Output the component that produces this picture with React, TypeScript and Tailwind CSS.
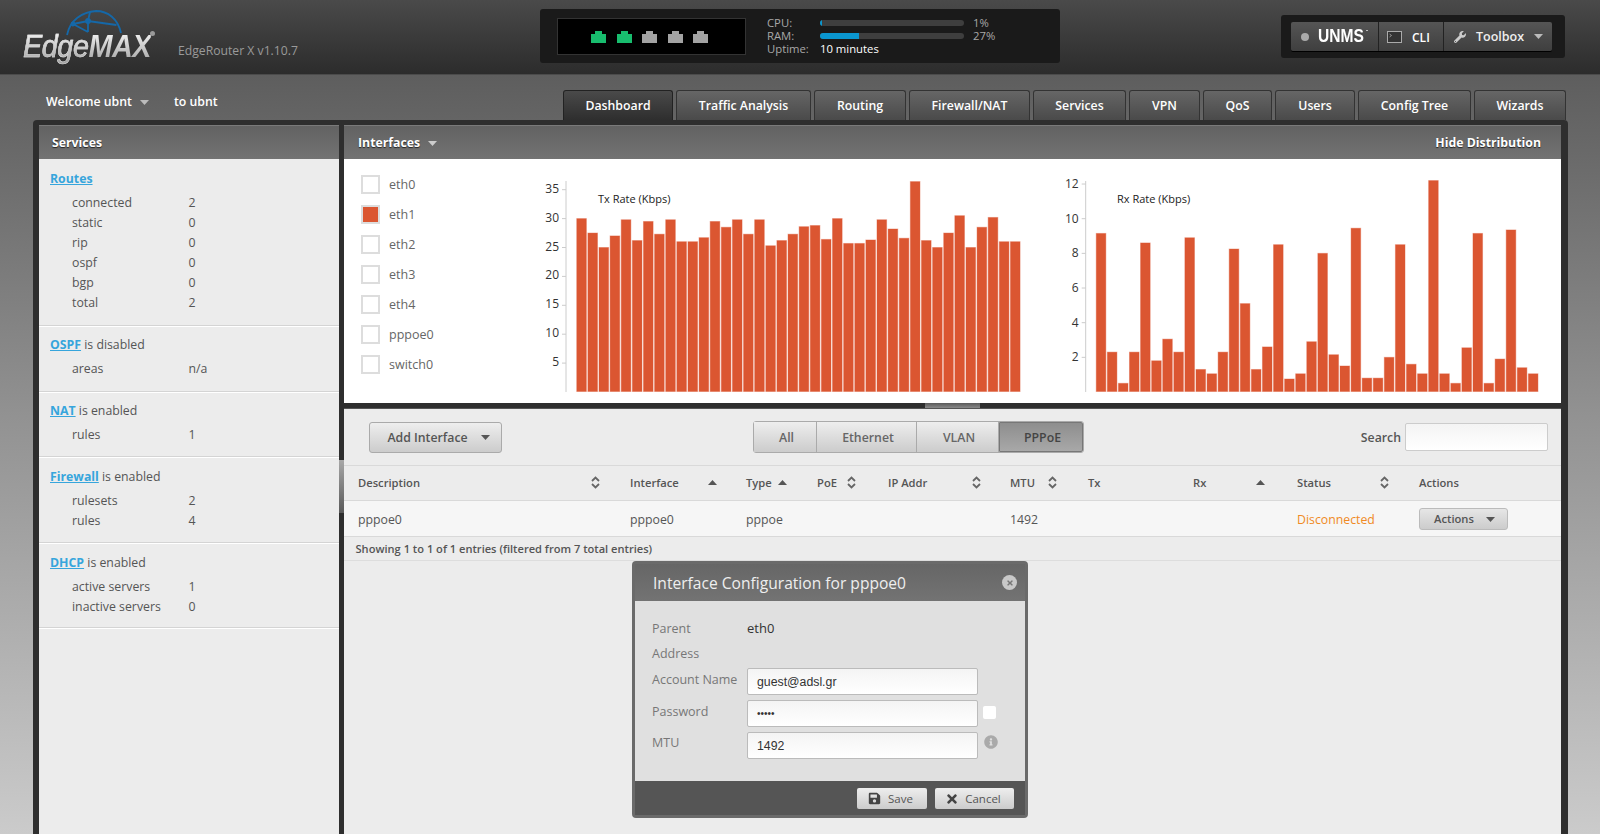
import React from 'react';
import {FaWrench, FaSave, FaTimes, FaInfoCircle} from 'react-icons/fa';

const txRates = [30, 27.5, 25, 27, 29.8, 26.2, 29.5, 27.3, 29.8, 26, 26, 26.7, 29.5, 28.5, 29.8, 27.3, 29.8, 25.3, 26.2, 27.3, 28.6, 28.8, 26.4, 30, 25.7, 25.7, 26.3, 29.8, 28.2, 26.6, 36.4, 26.2, 25, 27.5, 30.5, 25, 28.5, 30.2, 26, 26];
const rxRates = [9.15, 2.3, 0.5, 2.3, 8.6, 1.8, 3.05, 2.3, 8.9, 1.3, 1.05, 2.3, 8.25, 5.1, 1.3, 2.6, 8.5, 0.75, 1.05, 2.9, 8, 2.15, 1.5, 9.45, 0.8, 0.8, 2, 8.5, 1.6, 1.05, 12.2, 1.05, 0.5, 2.55, 9.15, 0.5, 1.9, 9.35, 1.4, 1.05];

const tabs = [
    {label: 'Dashboard', width: 'w-[110px]'},
    {label: 'Traffic Analysis', width: 'w-[135px]'},
    {label: 'Routing', width: 'w-[92px]'},
    {label: 'Firewall/NAT', width: 'w-[121px]'},
    {label: 'Services', width: 'w-[93px]'},
    {label: 'VPN', width: 'w-[71px]'},
    {label: 'QoS', width: 'w-[69px]'},
    {label: 'Users', width: 'w-[80px]'},
    {label: 'Config Tree', width: 'w-[113px]'},
    {label: 'Wizards', width: 'w-[92px]'},
];

const Caret = ({className = ''}: {className?: string}) => (
    <svg className={className} width="9" height="5" viewBox="0 0 9 5" fill="currentColor">
        <path d="M0 0h9L4.500 5z"/>
    </svg>
);

const CaretUp = ({className = ''}: {className?: string}) => (
    <svg className={className} width="9" height="5" viewBox="0 0 9 5" fill="#555">
        <path d="M0 5h9L4.500 0z"/>
    </svg>
);

const SortBoth = ({className = ''}: {className?: string}) => (
    <svg className={className} width="9" height="13" viewBox="0 0 9 13" fill="none" stroke="#666" strokeWidth="1.8">
        <path d="M1 5l3.500-3.500L8 5M1 8l3.500 3.500L8 8"/>
    </svg>
);

const Port = ({on}: {on: boolean}) => (
    <svg width="15" height="12" viewBox="0 0 15 12" fill={on ? '#18bd6e' : '#a3a3a3'}>
        <path d="M0 3h4V0h7v3h4v9H0z"/>
    </svg>
);

const ServiceSection = ({title, suffix, rows, className = 'pt-[8.5px] pb-[12px]'}: {
    title: string, suffix?: string, rows: [string, string][], className?: string
}) => (
    <div className={className + " border-b border-white shadow-[inset_0_-1px_0_#d4d4d4]"}>
        <div className="h-5 pl-[11px] leading-5 text-[12.3px] text-[#555]">
            <a className="font-bold text-[#36a5dc] underline">{title}</a>{suffix ? ' ' + suffix : ''}
        </div>
        <div className="mt-[4px]">
            {rows.map(([k, v]) => (
                <div key={k} className="flex h-5 pl-[33px] leading-5 text-[12.3px] text-[#555]">
                    <span className="w-[116.5px]">{k}</span>
                    <span>{v}</span>
                </div>
            ))}
        </div>
    </div>
);

const RateChart = ({title, titleX, axisX, data, max, step, unit, barX, pitch, width, labelDy}: {
    title: string, titleX: number, axisX: number, data: number[], max: number, step: number,
    unit: number, barX: number, pitch: number, width: string, labelDy: number
}) => {
    const base = 233;
    const ticks: number[] = [];
    for (let t = step; t <= max; t += step) ticks.push(t);
    return (
        <svg className={width + " h-full shrink-0"} viewBox={`0 0 ${width === 'w-[500px]' ? 500 : 521} 244`}>
            <line x1={axisX} x2={axisX} y1="22" y2={base} stroke="#ccc"/>
            {ticks.map(t => (
                <g key={t}>
                    <line x1={axisX - 4} x2={axisX} y1={base - t * unit} y2={base - t * unit} stroke="#ccc"/>
                    <text x={axisX - 7} y={base - t * unit + labelDy} textAnchor="end" fontSize="12" fill="#333"
                          fontFamily="'Open Sans', sans-serif">{t}</text>
                </g>
            ))}
            <text x={titleX} y="44" fontSize="11" fill="#222" fontFamily="'Open Sans', sans-serif">{title}</text>
            {data.map((v, i) => (
                <rect key={i} x={barX + i * pitch + 0.25} y={base - v * unit} width={pitch - 1.5} height={v * unit - 0.5}
                      fill="#db5631" stroke="#db5631" strokeOpacity="0.4"/>
            ))}
        </svg>
    );
};

const Head = ({label, width, icon}: {label: string, width: string, icon?: React.ReactNode}) => (
    <div className={width + " flex items-center shrink-0"}>
        <span>{label}</span>
        {icon}
    </div>
);

const App: React.FC = () => {
    return (
        <div className="relative w-[1600px] h-[834px] overflow-hidden flex flex-col bg-gradient-to-b from-[#535353] via-[#929292] via-50% to-[#cbcbcb] font-['Open_Sans',sans-serif]">
            {/* top bar */}
            <header className="relative h-[75px] shrink-0 flex bg-gradient-to-b from-[#4a4a4a] to-[#2c2c2c] border-b border-[#4b4b4b]">
                <div className="w-[540px] shrink-0 flex">
                    <div className="relative ml-[22px] w-[135px] h-full shrink-0">
                        <svg className="absolute left-[44px] top-[10px]" width="56" height="26" viewBox="0 0 56 26" fill="none"
                             stroke="#1568a8" strokeWidth="1.800">
                            <path d="M1 25C4 10 16 2 30 1c12 0 22 8 25 22"/>
                            <path d="M7 14l15-3 28.500 4M7 14l15 8M24 2l-2 9 0 11"/>
                            <circle cx="22" cy="11" r="2" fill="#1568a8"/>
                            <circle cx="7" cy="14" r="1.500" fill="#1568a8"/>
                        </svg>
                        <span className="absolute left-[1px] top-[28px] origin-left scale-x-[0.9] text-[32px] leading-[36px] italic text-transparent bg-gradient-to-b from-white to-[#a0a0a0] bg-clip-text tracking-[-0.5px] font-['Liberation_Sans',sans-serif]">
                            <span className="[-webkit-text-stroke:0.5px_#dddddd]">Edge</span><span className="font-bold">MAX</span>
                        </span>
                        <span className="absolute left-[128px] top-[31px] w-[5px] h-[5px] rounded-full bg-[#999]"/>
                    </div>
                    <span className="ml-[21px] mt-[42px] text-[12.2px] leading-[18px] text-[#9a9a9a]">EdgeRouter X v1.10.7</span>
                </div>

                <div className="w-[520px] h-[54px] mt-[9px] shrink-0 flex rounded-[3px] bg-[#1a1a1a]">
                    <div className="ml-[17px] mt-[9px] w-[189px] h-[37px] flex items-center justify-center gap-[10.500px] pr-[4px] bg-black border border-[#333]">
                        <Port on/><Port on/><Port on={false}/><Port on={false}/><Port on={false}/>
                    </div>
                    <div className="ml-[21px] mt-[7px] text-[11.3px] leading-[13px] text-[#a8a8a8]">
                        <div className="flex items-center">
                            <span className="w-[53px]">CPU:</span>
                            <span className="w-[144px] h-[6px] rounded-full bg-[#3e3e3e] overflow-hidden"><span className="block w-[2px] h-full bg-[#0a96cf]"/></span>
                            <span className="ml-[9px]">1%</span>
                        </div>
                        <div className="flex items-center">
                            <span className="w-[53px]">RAM:</span>
                            <span className="w-[144px] h-[6px] rounded-full bg-[#3e3e3e] overflow-hidden"><span className="block w-[39px] h-full bg-[#0a96cf]"/></span>
                            <span className="ml-[9px]">27%</span>
                        </div>
                        <div className="flex items-center">
                            <span className="w-[53px]">Uptime:</span>
                            <span className="text-white">10 minutes</span>
                        </div>
                    </div>
                </div>

                <div className="ml-[221px] mt-[15px] w-[284px] h-[43px] shrink-0 flex items-center pl-[10px] rounded-[3px] bg-[#1a1a1a]">
                    <div className="flex h-[29px] w-[261px] rounded-[2px] bg-gradient-to-b from-[#555] to-[#3f3f3f] shadow-[0_1px_0_#000] text-white">
                        <div className="w-[88px] flex items-center pl-[10px] border-r border-[#222]">
                            <span className="w-[8px] h-[8px] rounded-full bg-[#aaa]"/>
                            <span className="ml-[9px] origin-left scale-x-[0.82] text-[19px] font-bold font-['Liberation_Sans',sans-serif]">UNMS</span>
                            <span className="ml-[-8px] mb-[12px] w-[2px] h-px bg-[#bbb]"/>
                        </div>
                        <div className="w-[65px] flex items-center pl-[8px] border-r border-[#222]">
                            <svg width="15" height="12" viewBox="0 0 15 12" fill="#333" stroke="#aaa">
                                <rect x="0.500" y="0.500" width="14" height="11"/>
                                <path d="M2.500 3l2 1.500-2 1.500" strokeWidth="0.800" fill="none"/>
                            </svg>
                            <span className="ml-[10px] pt-[2px] text-[12px] font-semibold">CLI</span>
                        </div>
                        <div className="flex-1 flex items-center pl-[10px] text-[#eee]">
                            <FaWrench className="text-[12px] text-[#ccc]"/>
                            <span className="ml-[10px] pt-[2px] text-[12.5px] font-semibold">Toolbox</span>
                            <Caret className="ml-[10px] text-[#bbb]"/>
                        </div>
                    </div>
                </div>
            </header>

            {/* welcome + tabs */}
            <div className="h-[45px] shrink-0 flex items-end justify-between pr-[34px]">
                <div className="h-full flex items-center pt-[9px] pl-[46px] text-[12.3px] font-semibold text-white">
                    <span>Welcome ubnt</span>
                    <Caret className="ml-[8px] text-[#bbb]"/>
                    <span className="ml-[25px]">to ubnt</span>
                </div>
                <nav className="flex gap-[3px]">
                    {tabs.map((tab, i) => (
                        <div key={tab.label}
                             className={tab.width + " h-[30px] flex items-center justify-center pt-[2px] rounded-t-[3px] border border-b-0 text-[12.3px] font-semibold " + (i === 0
                                 ? "border-[#222] bg-gradient-to-b from-[#4a4a4a] to-[#2e2e2e] text-white"
                                 : "border-[#333] bg-gradient-to-b from-[#666] to-[#4a4a4a] text-white")}>
                            {tab.label}
                        </div>
                    ))}
                </nav>
            </div>

            {/* main frame */}
            <main className="relative ml-[33px] w-[1535px] flex-1 min-h-0 flex gap-[5px] pt-[5px] pl-[6px] pr-[7px] rounded-t-[4px] bg-[#2e2e2e]">
                <section className="w-[300px] shrink-0 flex flex-col bg-[#ececec]">
                    <div className="h-[34px] shrink-0 flex items-center pl-[13px] pt-[1px] border-t border-[#7a7a7a] bg-gradient-to-b from-[#626262] to-[#737373] text-[12.3px] font-bold text-white [text-shadow:0_1px_1px_#222]">Services</div>
                    <ServiceSection title="Routes" className="pt-[10px] pb-[13px]" rows={[['connected', '2'], ['static', '0'], ['rip', '0'], ['ospf', '0'], ['bgp', '0'], ['total', '2']]}/>
                    <ServiceSection title="OSPF" suffix="is disabled" className="pt-[7.5px] pb-[13px]" rows={[['areas', 'n/a']]}/>
                    <ServiceSection title="NAT" suffix="is enabled" rows={[['rules', '1']]}/>
                    <ServiceSection title="Firewall" suffix="is enabled" rows={[['rulesets', '2'], ['rules', '4']]}/>
                    <ServiceSection title="DHCP" suffix="is enabled" className="pt-[9.5px] pb-[11px]" rows={[['active servers', '1'], ['inactive servers', '0']]}/>
                </section>

                <div className="absolute left-[306px] top-[340px] w-[5px] h-[53px] bg-gradient-to-b from-[#a8a8a8] to-[#5a5a5a]"/>

                <section className="w-[1217px] shrink-0 flex flex-col bg-[#ececec]">
                    <div className="h-[34px] shrink-0 flex items-center justify-between pl-[14px] pr-[20px] pt-[1px] border-t border-[#7a7a7a] bg-gradient-to-b from-[#626262] to-[#737373] text-[12.3px] font-bold text-white [text-shadow:0_1px_1px_#222]">
                        <div className="flex items-center">
                            <span>Interfaces</span>
                            <Caret className="ml-[8px] text-[#ccc]"/>
                        </div>
                        <span>Hide Distribution</span>
                    </div>

                    <div className="h-[244px] shrink-0 flex bg-white">
                        <div className="w-[196px] shrink-0 pl-[17px] pt-[16px]">
                            {['eth0', 'eth1', 'eth2', 'eth3', 'eth4', 'pppoe0', 'switch0'].map(name => (
                                <div key={name} className="flex items-start h-[30px]">
                                    <span className={"w-[19px] h-[19px] border-2 border-[#ddd] " + (name === 'eth1' ? "bg-[#db5631]" : "bg-white")}/>
                                    <span className="ml-[9px] text-[12.5px] leading-5 text-[#666]">{name}</span>
                                </div>
                            ))}
                        </div>
                        <RateChart title="Tx Rate (Kbps)" titleX={58} axisX={26} data={txRates} max={35} step={5} unit={5.78}
                                   barX={36.500} pitch={11.120} width="w-[500px]" labelDy={3}/>
                        <RateChart title="Rx Rate (Kbps)" titleX={77} axisX={45.700} data={rxRates} max={12} step={2} unit={17.330}
                                   barX={56} pitch={11.080} width="w-[521px]" labelDy={4}/>
                    </div>

                    <div className="h-[6px] shrink-0 flex justify-center bg-[#2e2e2e] border-b border-[#555]">
                        <span className="w-[55px] h-full bg-gradient-to-b from-[#5a5a5a] to-[#8a8a8a]"/>
                    </div>

                    <div className="h-[56px] shrink-0 flex items-center pl-[25px] pr-[13px] text-[12.3px] text-[#555]">
                        <button className="w-[133px] h-[31px] flex items-center justify-center pl-[6px] rounded-[3px] border border-[#aaa] bg-gradient-to-b from-[#eee] to-[#ccc] text-[12.3px] font-semibold text-[#555]">
                            <span className="pt-[3px]">Add Interface</span>
                            <Caret className="ml-[13px]"/>
                        </button>
                        <div className="ml-[251px] flex h-[32px] w-[331px] rounded-[3px] border border-[#aaa] font-semibold text-[#666]">
                            <span className="w-[63px] flex items-center justify-center pl-[3px] pt-[3px] border-r border-[#aaa] bg-gradient-to-b from-[#eee] to-[#ccc]">All</span>
                            <span className="w-[100px] flex items-center justify-center pl-[3px] pt-[3px] border-r border-[#aaa] bg-gradient-to-b from-[#eee] to-[#ccc]">Ethernet</span>
                            <span className="w-[82px] flex items-center justify-center pl-[3px] pt-[3px] border-r border-[#aaa] bg-gradient-to-b from-[#eee] to-[#ccc]">VLAN</span>
                            <span className="flex-1 flex items-center justify-center pl-[3px] pt-[3px] rounded-r-[2px] border border-[#777] bg-gradient-to-b from-[#8e8e8e] to-[#a8a8a8] text-[#444]">PPPoE</span>
                        </div>
                        <span className="ml-auto pt-[3px] font-semibold text-[#555]">Search</span>
                        <input className="ml-[4px] w-[143px] h-[28px] rounded-[2px] border border-[#ccc] bg-gradient-to-b from-[#f4f4f4] to-white"/>
                    </div>

                    <div className="h-[36px] shrink-0 flex items-center pl-[14px] border-y border-[#d9d9d9] text-[11.2px] font-semibold text-[#555]">
                        <Head label="Description" width="w-[272px]" icon={<SortBoth className="ml-[171px]"/>}/>
                        <Head label="Interface" width="w-[116px]" icon={<CaretUp className="ml-[29px]"/>}/>
                        <Head label="Type" width="w-[71px]" icon={<CaretUp className="ml-[6px]"/>}/>
                        <Head label="PoE" width="w-[71px]" icon={<SortBoth className="ml-[10px]"/>}/>
                        <Head label="IP Addr" width="w-[122px]" icon={<SortBoth className="ml-[45px]"/>}/>
                        <Head label="MTU" width="w-[78px]" icon={<SortBoth className="ml-[13px]"/>}/>
                        <Head label="Tx" width="w-[105px]"/>
                        <Head label="Rx" width="w-[104px]" icon={<CaretUp className="ml-[50px]"/>}/>
                        <Head label="Status" width="w-[122px]" icon={<SortBoth className="ml-[49px]"/>}/>
                        <Head label="Actions" width="w-[100px]"/>
                    </div>

                    <div className="h-[36px] shrink-0 flex items-center pl-[14px] border-b border-[#d9d9d9] bg-[#f6f6f6] text-[12.3px] text-[#555]">
                        <span className="w-[272px] pt-[3px]">pppoe0</span>
                        <span className="w-[116px] pt-[3px]">pppoe0</span>
                        <span className="w-[264px] pt-[3px]">pppoe</span>
                        <span className="w-[287px] pt-[3px]">1492</span>
                        <span className="w-[122px] pt-[3px] text-[#f08a24]">Disconnected</span>
                        <button className="w-[89px] h-[22px] mt-[1px] flex items-center justify-center pl-[2px] rounded-[3px] border border-[#bbb] bg-gradient-to-b from-[#e6e6e6] to-[#ccc] text-[11.2px] font-semibold text-[#555]">
                            <span>Actions</span>
                            <Caret className="ml-[12px]"/>
                        </button>
                    </div>

                    <div className="h-[24px] shrink-0 flex items-center pl-[11.500px] pt-[2px] border-b border-[#ddd] text-[11.1px] font-semibold text-[#555]">
                        Showing 1 to 1 of 1 entries (filtered from 7 total entries)
                    </div>
                </section>
            </main>

            {/* dialog */}
            <div className="absolute left-[632px] top-[561px] w-[396px] h-[257px] flex flex-col rounded-[4px] border-[3px] border-[#6a6a6a]">
                <div className="h-[37px] shrink-0 flex items-center justify-between pl-[18px] pr-[8px] bg-gradient-to-b from-[#666] to-[#737373] text-[15.6px] text-[#eee]">
                    <span className="pt-[2px]">Interface Configuration for pppoe0</span>
                    <span className="w-[15px] h-[15px] flex items-center justify-center rounded-full bg-[#c8c8c8] text-[#777]">
                        <FaTimes className="text-[8px]"/>
                    </span>
                </div>
                <div className="h-[180px] shrink-0 pl-[17px] pt-[18px] bg-[#e0e0e0] text-[12.5px] leading-5 text-[#777]">
                    <div className="flex h-[25px]">
                        <span className="w-[95px]">Parent</span>
                        <span className="-mt-[1px] text-[13px] text-[#333]">eth0</span>
                    </div>
                    <div className="h-[24px]">Address</div>
                    <div className="flex h-[32px]">
                        <span className="w-[95px] pt-[2px]">Account Name</span>
                        <div className="w-[231px] h-[27px] flex items-center pl-[9px] rounded-[2px] border border-[#bbb] bg-gradient-to-b from-[#f4f4f4] to-white text-[12.3px] text-[#333] font-['Liberation_Sans',sans-serif]">guest@adsl.gr</div>
                    </div>
                    <div className="flex h-[32px]">
                        <span className="w-[95px] pt-[2px]">Password</span>
                        <div className="w-[231px] h-[27px] flex items-center pl-[9px] rounded-[2px] border border-[#bbb] bg-gradient-to-b from-[#f4f4f4] to-white text-[10px] text-[#333] font-['Liberation_Sans',sans-serif]">•••••</div>
                        <span className="ml-[5px] mt-[6px] w-[13px] h-[13px] rounded-[2px] bg-white"/>
                    </div>
                    <div className="flex h-[27px]">
                        <span className="w-[95px] pt-[1px]">MTU</span>
                        <div className="w-[231px] h-[27px] flex items-center pl-[9px] rounded-[2px] border border-[#bbb] bg-gradient-to-b from-[#f4f4f4] to-white text-[12.3px] text-[#333] font-['Liberation_Sans',sans-serif]">1492</div>
                        <FaInfoCircle className="ml-[6px] mt-[3px] text-[14px] text-[#aaa]"/>
                    </div>
                </div>
                <div className="flex-1 flex items-start justify-end gap-[8px] pt-[7px] pr-[11px] bg-[#555]">
                    <button className="w-[70px] h-[21px] flex items-center justify-center pr-[3px] rounded-[2px] bg-gradient-to-b from-[#eee] to-[#ccc] text-[11.5px] text-[#555]">
                        <FaSave className="text-[13px] mr-[7px] text-[#444]"/>Save
                    </button>
                    <button className="w-[79px] h-[21px] flex items-center justify-center pr-[3px] rounded-[2px] bg-gradient-to-b from-[#eee] to-[#ccc] text-[11.5px] text-[#555]">
                        <FaTimes className="text-[14px] mr-[6px] text-[#444]"/>Cancel
                    </button>
                </div>
            </div>
        </div>
    );
};

export default App;
